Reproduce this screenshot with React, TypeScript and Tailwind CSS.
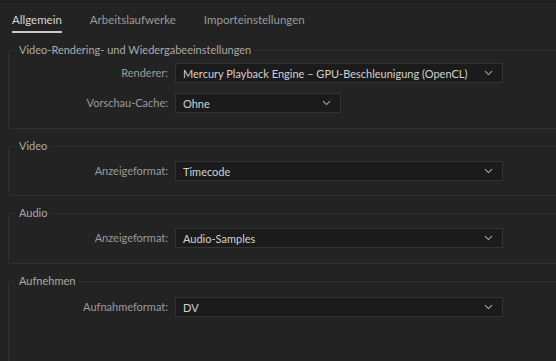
import { FC } from 'react';

interface SelectProps {
  value: string;
  width: string;
}

/** Dark dropdown field with a small chevron on the right */
const Select: FC<SelectProps> = ({ value, width }) => (
  <div
    className={`${width} shrink-0 h-[20px] flex items-center justify-between bg-[#1b1b1b] border border-[#333333] pl-[7px] pr-[9px] text-[#d2d2d2]`}
  >
    <span className="leading-none">{value}</span>
    <svg width="9" height="6" viewBox="0 0 9 6" fill="none">
      <path d="M1 1.2 L4.5 4.6 L8 1.2" stroke="#a8a8a8" strokeWidth="1.1" />
    </svg>
  </div>
);

interface RowProps {
  label: string;
  value: string;
  width?: string;
}

const Row: FC<RowProps> = ({ label, value, width = 'w-[328px]' }) => (
  <div className="flex items-center">
    <div className="w-[166px] shrink-0 text-right text-[#9b9b9b] pr-[7px]">{label}</div>
    <Select value={value} width={width} />
  </div>
);

interface GroupProps {
  title: string;
  className?: string;
  children: React.ReactNode;
}

/** Fieldset with legend, border runs off the right side of the panel */
const Group: FC<GroupProps> = ({ title, className = '', children }) => (
  <fieldset className={`border border-[#313131] rounded-[2px] mr-[-12px] ${className}`}>
    <legend className="ml-[6px] px-[4px] h-[14px] leading-[14px] text-[#a9a9a9]">{title}</legend>
    {children}
  </fieldset>
);

const App: FC = () => {
  return (
    <div
      className="w-[556px] h-[361px] overflow-hidden bg-[#232323] text-[11px]"
      style={{ fontFamily: 'Lato, "Noto Sans", sans-serif' }}
    >
      <div className="h-[3px] bg-[#1e1e1e]" />
      <div className="h-[40px] flex items-start pl-[12px] pt-[10px] gap-[28px] text-[11.5px]">
        <div className="flex flex-col">
          <span className="text-[#d6d6d6] leading-[14px]">Allgemein</span>
          <div className="mt-[4px] h-[2px] bg-[#c9c9c9]" />
        </div>
        <span className="text-[#9a9a9a] leading-[14px]">Arbeitslaufwerke</span>
        <span className="text-[#9a9a9a] leading-[14px]">Importeinstellungen</span>
      </div>

      <div className="pl-[8px]">
        <Group title="Video-Rendering- und Wiedergabeeinstellungen" className="pt-[6px] pb-[15px]">
          <div className="flex flex-col gap-[10px]">
            <Row label="Renderer:" value="Mercury Playback Engine – GPU-Beschleunigung (OpenCL)" />
            <Row label="Vorschau-Cache:" value="Ohne" width="w-[166px]" />
          </div>
        </Group>

        <Group title="Video" className="mt-[10px] pt-[8px] pb-[14px]">
          <Row label="Anzeigeformat:" value="Timecode" />
        </Group>

        <Group title="Audio" className="mt-[10px] pt-[8px] pb-[15px]">
          <Row label="Anzeigeformat:" value="Audio-Samples" />
        </Group>

        <Group title="Aufnehmen" className="mt-[10px] pt-[9px] pb-[45px]">
          <Row label="Aufnahmeformat:" value="DV" />
        </Group>
      </div>
    </div>
  );
};

export default App;
